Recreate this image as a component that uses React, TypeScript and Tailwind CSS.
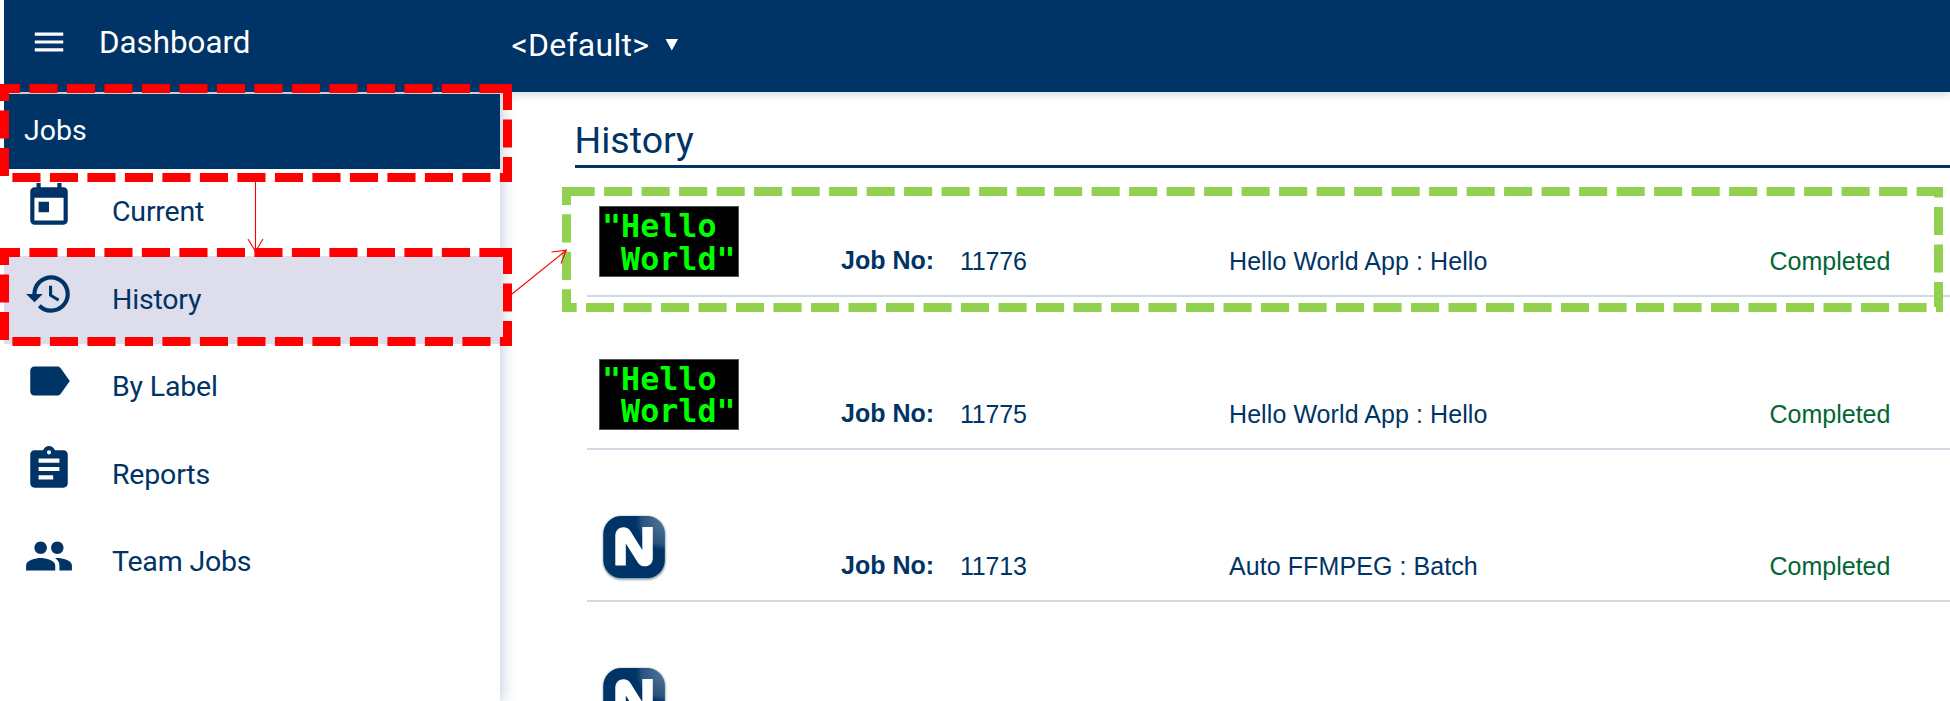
import type { ReactNode } from "react";
import { MdAssignment, MdHistory, MdLabel, MdMenu, MdPeople, MdToday } from "react-icons/md";

type MenuEntry = { label: string; icon: ReactNode; active?: boolean };

const menu: MenuEntry[] = [
  { label: "Current", icon: <MdToday /> },
  { label: "History", icon: <MdHistory />, active: true },
  { label: "By Label", icon: <MdLabel /> },
  { label: "Reports", icon: <MdAssignment /> },
  { label: "Team Jobs", icon: <MdPeople /> },
];

type Job = { no?: string; name?: string; status?: string; kind: "hello" | "n" };

const jobs: Job[] = [
  { no: "11776", name: "Hello World App : Hello", status: "Completed", kind: "hello" },
  { no: "11775", name: "Hello World App : Hello", status: "Completed", kind: "hello" },
  { no: "11713", name: "Auto FFMPEG : Batch", status: "Completed", kind: "n" },
  { kind: "n" },
];

function HelloThumb() {
  return (
    <div className="mt-[19px] ml-3 h-[71px] w-[140px] shrink-0 border border-[#555] bg-black pt-[3px] pl-[2px] font-['DejaVu_Sans_Mono',monospace] text-[31.7px] leading-[32.5px] font-bold whitespace-pre text-[#00ff00]">
      <div>{'"Hello'}</div>
      <div>{' World"'}</div>
    </div>
  );
}

function NLogo() {
  return (
    <div className="mt-[21.5px] ml-3 w-[140px] shrink-0 pl-[2px]">
      <svg width="68" height="72" viewBox="0 0 68 72">
        <defs>
          <radialGradient id="gloss" cx="64" cy="6" r="30" gradientUnits="userSpaceOnUse">
            <stop offset="0" stopColor="#fff" stopOpacity="0.34" />
            <stop offset="0.8" stopColor="#fff" stopOpacity="0.16" />
            <stop offset="1" stopColor="#fff" stopOpacity="0" />
          </radialGradient>
          <filter id="soft" x="-10%" y="-10%" width="120%" height="120%">
            <feGaussianBlur stdDeviation="1.2" />
          </filter>
        </defs>
        <g transform="translate(0.8 0.5)">
          <rect x="1.5" y="2" width="62" height="63" rx="18" fill="#33586e" opacity="0.7" filter="url(#soft)" />
          <rect x="1.5" y="1.5" width="61.5" height="62" rx="18" fill="#003366" />
          <rect x="1.5" y="1.5" width="61.5" height="62" rx="18" fill="url(#gloss)" />
          <path
            d="M13.500 51V21.500c0-5.700 3.700-8.800 8.200-8.800 3 0 5.300 1.300 6.900 3.700L40.500 35.500V12.500H51V43.500c0 5.300-3.500 8.300-7.700 8.300-3.200 0-5.600-1.300-7.300-3.900L24 29V51z"
            fill="#fff"
          />
        </g>
      </svg>
    </div>
  );
}

function JobRow({ job }: { job: Job }) {
  return (
    <div className="flex h-[152.5px] shrink-0 flex-col text-[25px] leading-[30px] text-[#003366]">
      <div className="flex h-[108px] shrink-0">
        {job.kind === "hello" ? <HelloThumb /> : <NLogo />}
        <div className="mt-[58px] ml-[102px] w-[119px] font-bold">{job.no && "Job No:"}</div>
        <div className="mt-[59px] w-[269px] tracking-[-0.2px]">{job.no}</div>
        <div className="mt-[59px] w-[540.5px] tracking-[0.08px]">{job.name}</div>
        <div className="mt-[59px] text-[#006633]">{job.status}</div>
      </div>
      {job.no && <div className="h-[2px] w-full shrink-0 bg-[#d0dae4]" />}
    </div>
  );
}

type Frame = { segments: string[]; corners: string };

function DashedFrame({ color, segments, corners }: Frame & { color: string }) {
  return (
    <g fill="none" stroke={color} strokeWidth="9">
      {segments.map((d) => (
        <path key={d} d={d} strokeDasharray="28.1 9.4" />
      ))}
      <path d={corners} />
    </g>
  );
}

function redFrame(y: number, bottom: number, secondDash: number): Frame {
  return {
    segments: [
      `M29.4 ${y + 4.5}H507`,
      `M12.4 ${bottom - 4.5}H512`,
      `M4.5 ${secondDash}V${bottom - 6}`,
      `M507.5 ${secondDash + 9}V${bottom}`,
    ],
    corners: `M0 ${y + 4.5}H20M4.5 ${y}V${y + 17}M490 ${y + 4.5}H512M507.5 ${y}V${y + 26}`,
  };
}

function Annotations() {
  const first = redFrame(84, 182, 110.4);
  const second = redFrame(248, 346, 274.4);
  return (
    <svg className="pointer-events-none absolute top-0 left-0 z-30" width="1950" height="701" viewBox="0 0 1950 701">
      <DashedFrame color="#ff0000" {...first} />
      <DashedFrame color="#ff0000" {...second} />
      <DashedFrame
        color="#92d050"
        segments={["M566.6 191.5H1943", "M586 307.5H1927", "M566.5 214.3V312", "M1938.5 207V307"]}
        corners="M562 191.5H594M566.5 187V205M562 307.5H576.7M1938.5 187V197.5M1936 307.5H1943"
      />
      <g fill="none" stroke="#ff0000" strokeWidth="1.1">
        <path d="M255.500 182V251M248 239L255.500 251.500L263 239" />
        <path d="M512 294L566 250.500M551.500 252L566.300 250.200L561 263.500" />
      </g>
    </svg>
  );
}

export default function App() {
  return (
    <div className="relative h-[701px] w-[1950px] overflow-hidden bg-white pl-1 font-['Roboto',sans-serif] text-[#003366]">
      <div className="flex h-full flex-col overflow-hidden">
        <header className="z-10 flex h-[92px] shrink-0 bg-[#003366] text-white shadow-[0_1px_10px_rgba(0,51,102,0.25)]">
          <MdMenu className="mt-[23px] ml-[26px] size-[38px] shrink-0" />
          <div className="mt-[23px] ml-[31px] w-[412.5px] text-[31.3px] leading-[40px]">Dashboard</div>
          <div className="mt-[25px] flex text-[32px] leading-[40px] tracking-[0.25px]">
            <span>&lt;Default&gt;</span>
            <svg className="mt-[13px] ml-[15.5px]" width="14" height="13" viewBox="0 0 14 13">
              <path d="M0.500 1H13L6.800 12.500z" fill="#fff" />
            </svg>
          </div>
        </header>
        <div className="flex min-h-0 flex-1">
          <aside className="z-20 flex w-[496px] shrink-0 flex-col border-t-2 border-[#c5d0db] bg-white shadow-[2px_0_14px_rgba(0,51,102,0.25)]">
            <div className="h-[74.5px] shrink-0 bg-[#003366] pt-[17px] pl-5 text-[28.5px] leading-[40px] text-white">Jobs</div>
            <nav className="flex flex-col">
              {menu.map((m) => (
                <div key={m.label} className={m.active ? "flex h-[87.5px] bg-[#ddddec]" : "flex h-[87.5px]"}>
                  <div className="mt-[12.5px] ml-[20.3px] w-[87.7px] text-[50px]">{m.icon}</div>
                  <div className="pt-[23.5px] text-[28.5px] leading-[40px] tracking-[-0.18px]">{m.label}</div>
                </div>
              ))}
            </nav>
          </aside>
          <main className="flex min-w-0 flex-1 flex-col pl-[74.5px]">
            <h1 className="h-[76px] shrink-0 border-b-[3px] border-[#003366] pt-[23px] text-[37.5px] leading-[50px]">
              History
            </h1>
            <div className="flex flex-col pt-[19px] pl-[12.5px] font-['Liberation_Sans',sans-serif]">
              {jobs.map((job, i) => (
                <JobRow key={i} job={job} />
              ))}
            </div>
          </main>
        </div>
      </div>
      <Annotations />
    </div>
  );
}
